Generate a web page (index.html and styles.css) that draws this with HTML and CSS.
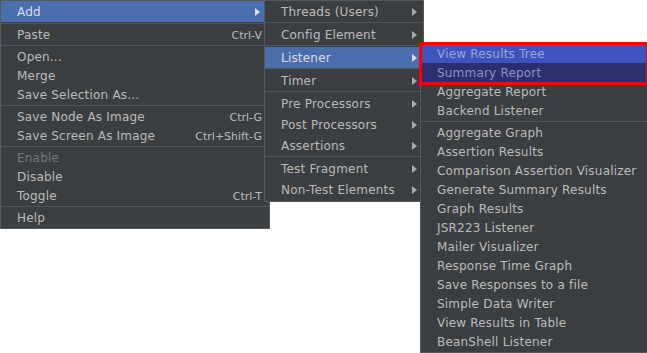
FILE: index.html
```html
<!DOCTYPE html>
<html>
<head>
<meta charset="utf-8">
<link rel="stylesheet" href="styles.css">
</head>
<body>
<div class="canvas">
  <div class="menu m1">
    <div class="item tall active"><span class="label">Add</span><span class="arrow"></span></div>
    <div class="sep"></div>
    <div class="item"><span class="label">Paste</span><span class="key">Ctrl-V</span></div>
    <div class="sep"></div>
    <div class="item"><span class="label">Open...</span></div>
    <div class="item"><span class="label">Merge</span></div>
    <div class="item"><span class="label">Save Selection As...</span></div>
    <div class="sep"></div>
    <div class="item"><span class="label">Save Node As Image</span><span class="key">Ctrl-G</span></div>
    <div class="item"><span class="label">Save Screen As Image</span><span class="key">Ctrl+Shift-G</span></div>
    <div class="sep"></div>
    <div class="item disabled"><span class="label">Enable</span></div>
    <div class="item"><span class="label">Disable</span></div>
    <div class="item"><span class="label">Toggle</span><span class="key">Ctrl-T</span></div>
    <div class="sep"></div>
    <div class="item"><span class="label">Help</span></div>
  </div>

  <div class="menu m2">
    <div class="item tall"><span class="label">Threads (Users)</span><span class="arrow"></span></div>
    <div class="sep s2"></div>
    <div class="item tall"><span class="label">Config Element</span><span class="arrow"></span></div>
    <div class="sep s2"></div>
    <div class="item tall active"><span class="label">Listener</span><span class="arrow"></span></div>
    <div class="sep s2"></div>
    <div class="item tall"><span class="label">Timer</span><span class="arrow"></span></div>
    <div class="sep s2"></div>
    <div class="item tall"><span class="label">Pre Processors</span><span class="arrow"></span></div>
    <div class="item tall"><span class="label">Post Processors</span><span class="arrow"></span></div>
    <div class="item tall"><span class="label">Assertions</span><span class="arrow"></span></div>
    <div class="sep s2"></div>
    <div class="item tall"><span class="label">Test Fragment</span><span class="arrow"></span></div>
    <div class="item tall"><span class="label">Non-Test Elements</span><span class="arrow"></span></div>
  </div>

  <div class="menu m3">
    <div class="item mark1"><span class="label">View Results Tree</span></div>
    <div class="item mark2"><span class="label">Summary Report</span></div>
    <div class="item"><span class="label">Aggregate Report</span></div>
    <div class="item"><span class="label">Backend Listener</span></div>
    <div class="sep"></div>
    <div class="item"><span class="label">Aggregate Graph</span></div>
    <div class="item"><span class="label">Assertion Results</span></div>
    <div class="item"><span class="label">Comparison Assertion Visualizer</span></div>
    <div class="item"><span class="label">Generate Summary Results</span></div>
    <div class="item"><span class="label">Graph Results</span></div>
    <div class="item"><span class="label">JSR223 Listener</span></div>
    <div class="item"><span class="label">Mailer Visualizer</span></div>
    <div class="item"><span class="label">Response Time Graph</span></div>
    <div class="item"><span class="label">Save Responses to a file</span></div>
    <div class="item"><span class="label">Simple Data Writer</span></div>
    <div class="item"><span class="label">View Results in Table</span></div>
    <div class="item"><span class="label">BeanShell Listener</span></div>
  </div>

  <div class="redbox"></div>
</div>
</body>
</html>
```

FILE: styles.css
```css
html, body {
  margin: 0;
  padding: 0;
  background: #ffffff;
}

.canvas {
  position: relative;
  width: 647px;
  height: 353px;
  overflow: hidden;
  font-family: "DejaVu Sans", sans-serif;
  font-size: 12px;
  color: #bbbbbb;
}

.menu {
  position: absolute;
  background: #3c3f41;
  border: 1px solid #55595b;
  box-sizing: border-box;
  display: flex;
  flex-direction: column;
}

.m1 {
  left: 0;
  top: 0;
  width: 270px;
  height: 229px;
}

.m2 {
  left: 264px;
  top: 0;
  width: 160px;
  height: 202px;
}

.m3 {
  left: 420px;
  top: 43px;
  width: 230px;
  height: 310px;
}

.item {
  box-sizing: border-box;
  height: 19px;
  flex: none;
  display: flex;
  align-items: center;
  padding: 1px 8px 0 16px;
  white-space: nowrap;
}

.item.tall {
  height: 21px;
}

.m1 .item {
  padding-right: 7px;
}

.m1 .item.tall {
  padding-right: 9px;
}

.m2 .item {
  padding-right: 6px;
}

.item.active {
  background: #4b6eaf;
  color: #dddddd;
}

.item.disabled {
  color: #777777;
}

.label {
  flex: none;
  letter-spacing: 0.2px;
}

.key {
  margin-left: auto;
  font-size: 11px;
}

.arrow {
  margin-left: auto;
  width: 0;
  height: 0;
  border-top: 4px solid transparent;
  border-bottom: 4px solid transparent;
  border-left: 5px solid #a9acae;
}

.item.active .arrow {
  border-left-color: #e0e0e0;
}

.sep {
  flex: none;
  box-sizing: border-box;
  border-top: 1px solid #515658;
  margin-top: 1px;
  height: 2px;
}

.sep.s2 {
  margin-top: 0;
  height: 2px;
}

.item.mark1 {
  background: #3d54bf;
  color: #9aa5de;
}

.item.mark2 {
  background: #2d306e;
  color: #8a8fcf;
}

.redbox {
  position: absolute;
  left: 419px;
  top: 42px;
  width: 230px;
  height: 43px;
  box-sizing: border-box;
  border: 3px solid #ff0000;
}
```
